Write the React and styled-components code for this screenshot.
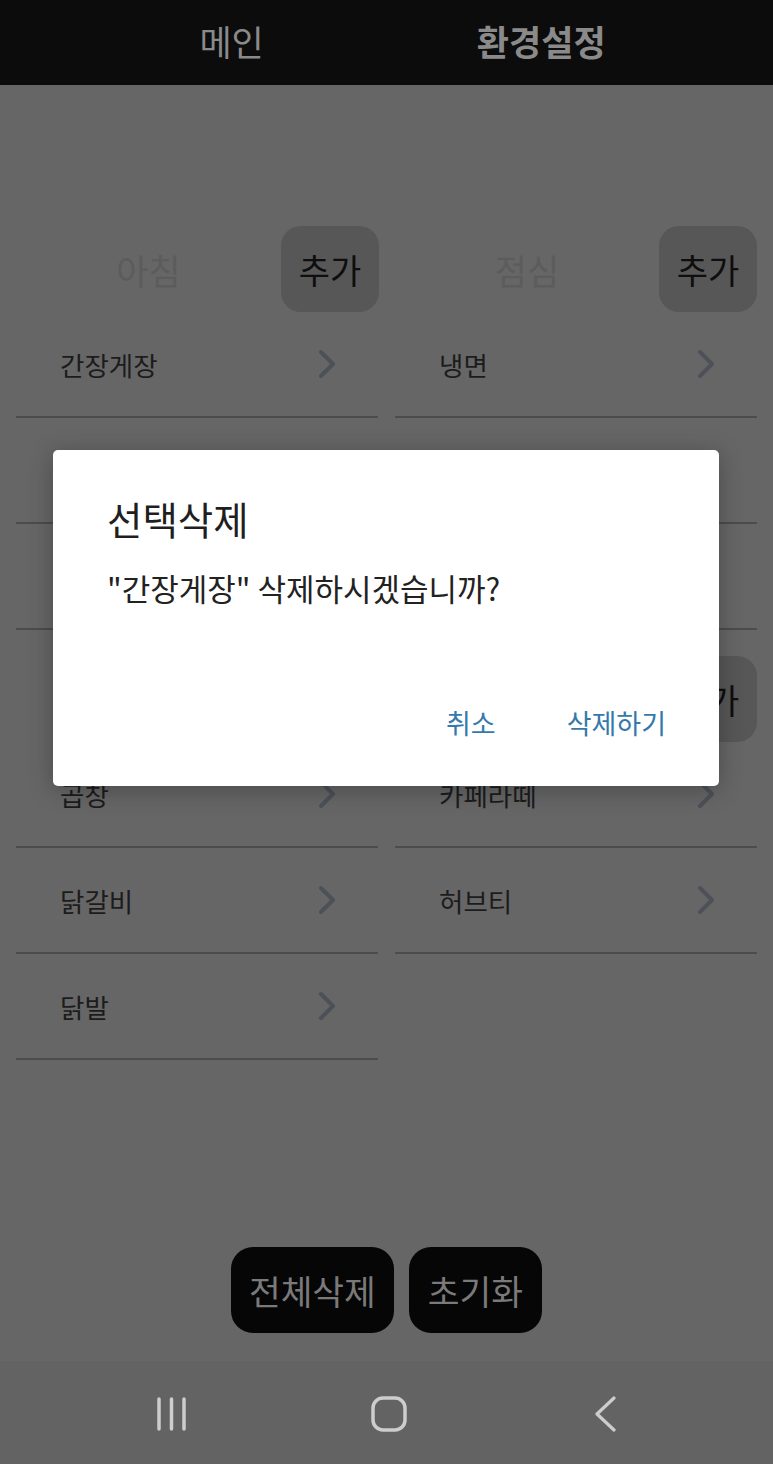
import React from "react";
import styled, { createGlobalStyle } from "styled-components";

const Global = createGlobalStyle`
  html, body { margin: 0; padding: 0; }
  body { font-family: "Noto Sans CJK KR", "Noto Sans", sans-serif; background: #666666; }
  * { box-sizing: border-box; }
`;

const Screen = styled.div`
  position: relative;
  width: 773px;
  height: 1464px;
  display: flex;
  flex-direction: column;
  background: #666666;
  overflow: hidden;
`;

const TopBar = styled.div`
  height: 85px;
  flex: none;
  background: #0c0c0c;
  display: flex;
  align-items: center;
  justify-content: center;
  gap: 213px;
  padding-left: 32px;
`;

const Tab = styled.div`
  font-size: 35px;
  color: #8a8a8a;
  font-weight: ${(p) => (p.$active ? 700 : 400)};
  line-height: 1;
  margin-top: -5px;
`;

const Content = styled.div`
  flex: 1;
  display: flex;
  flex-direction: column;
  padding: 141px 16px 28px;
`;

const Grid = styled.div`
  display: grid;
  grid-template-columns: 362px 362px;
  column-gap: 17px;
  row-gap: 26px;
`;

const Section = styled.div`
  display: flex;
  flex-direction: column;
`;

const SectionHeader = styled.div`
  height: 86px;
  display: flex;
  align-items: center;
`;

const SectionLabel = styled.div`
  flex: 1;
  text-align: center;
  font-size: 35px;
  color: #5c5c5c;
`;

const AddButton = styled.div`
  width: 98px;
  height: 86px;
  border-radius: 20px;
  background: #575757;
  color: #0e0e0e;
  font-size: 34px;
  display: flex;
  align-items: center;
  justify-content: center;
  margin-right: ${(p) => (p.$right ? "0" : "-1px")};
`;

const Item = styled.div`
  height: 106px;
  border-bottom: 2px solid #4c4c4c;
  display: flex;
  align-items: center;
  justify-content: space-between;
  padding: 0 41px 0 44px;
`;

const ItemText = styled.span`
  font-size: 26.5px;
  color: #1c1c1c;
`;

const ButtonBar = styled.div`
  margin-top: auto;
  display: flex;
  justify-content: center;
  gap: 15px;
`;

const DarkButton = styled.div`
  height: 86px;
  padding: 0 ${(p) => p.$pad}px;
  border-radius: 22px;
  background: #060606;
  color: #7a7a7a;
  font-size: 34.5px;
  display: flex;
  align-items: center;
  justify-content: center;
`;

const NavBar = styled.div`
  height: 103px;
  flex: none;
  background: #636363;
  display: flex;
  align-items: center;
  justify-content: center;
  padding-left: 5px;
`;

const NavCell = styled.div`
  width: 217px;
  display: flex;
  justify-content: center;
  padding-top: 2px;
`;

const Dialog = styled.div`
  position: absolute;
  left: 53px;
  top: 450px;
  width: 666px;
  height: 336px;
  background: #ffffff;
  border-radius: 5px;
  box-shadow: 0 4px 24px rgba(0, 0, 0, 0.28);
  display: flex;
  flex-direction: column;
  padding: 45px 53px 0 54px;
`;

const DialogTitle = styled.div`
  font-size: 38.5px;
  color: #1f1f1f;
  line-height: 46px;
`;

const DialogMessage = styled.div`
  margin-top: 28px;
  font-size: 31px;
  color: #222222;
  line-height: 37px;
`;

const DialogActions = styled.div`
  margin-top: auto;
  display: flex;
  justify-content: flex-end;
  gap: 71px;
  padding-bottom: 47px;
`;

const DialogButton = styled.div`
  font-size: 27px;
  color: #3479ab;
  line-height: 32px;
`;

const Chevron = () => (
  <svg width="20" height="32" viewBox="0 0 20 32">
    <polyline
      points="4,4 16,16 4,28"
      fill="none"
      stroke="#4c5158"
      strokeWidth="4"
      strokeLinecap="round"
      strokeLinejoin="round"
    />
  </svg>
);

const RecentIcon = () => (
  <svg width="34" height="34" viewBox="0 0 34 34">
    {[4, 16.5, 29].map((x) => (
      <line key={x} x1={x} y1="2" x2={x} y2="32" stroke="#cdcdcd" strokeWidth="3.5" strokeLinecap="round" />
    ))}
  </svg>
);

const HomeIcon = () => (
  <svg width="36" height="36" viewBox="0 0 36 36">
    <rect x="2" y="2" width="32" height="32" rx="10" fill="none" stroke="#cdcdcd" strokeWidth="3.5" />
  </svg>
);

const BackIcon = () => (
  <svg width="24" height="36" viewBox="0 0 24 36">
    <polyline points="20,2 3,18 20,34" fill="none" stroke="#cdcdcd" strokeWidth="3.2" strokeLinecap="round" strokeLinejoin="round" />
  </svg>
);

const sections = [
  { title: "아침", items: ["간장게장", "김치찌개", "된장찌개"] },
  { title: "점심", items: ["냉면", "비빔밥", "칼국수"] },
  { title: "저녁", items: ["곱창", "닭갈비", "닭발"] },
  { title: "음료", items: ["카페라떼", "허브티"] },
];

export default function App() {
  return (
    <>
      <Global />
      <Screen>
        <TopBar>
          <Tab>메인</Tab>
          <Tab $active>환경설정</Tab>
        </TopBar>
        <Content>
          <Grid>
            {sections.map((s, i) => (
              <Section key={s.title}>
                <SectionHeader>
                  <SectionLabel>{s.title}</SectionLabel>
                  <AddButton $right={i % 2 === 1}>추가</AddButton>
                </SectionHeader>
                {s.items.map((it) => (
                  <Item key={it}>
                    <ItemText>{it}</ItemText>
                    <Chevron />
                  </Item>
                ))}
              </Section>
            ))}
          </Grid>
          <ButtonBar>
            <DarkButton $pad={18}>전체삭제</DarkButton>
            <DarkButton $pad={19}>초기화</DarkButton>
          </ButtonBar>
        </Content>
        <NavBar>
          <NavCell><RecentIcon /></NavCell>
          <NavCell><HomeIcon /></NavCell>
          <NavCell><BackIcon /></NavCell>
        </NavBar>
        <Dialog>
          <DialogTitle>선택삭제</DialogTitle>
          <DialogMessage>"간장게장" 삭제하시겠습니까?</DialogMessage>
          <DialogActions>
            <DialogButton>취소</DialogButton>
            <DialogButton>삭제하기</DialogButton>
          </DialogActions>
        </Dialog>
      </Screen>
    </>
  );
}
